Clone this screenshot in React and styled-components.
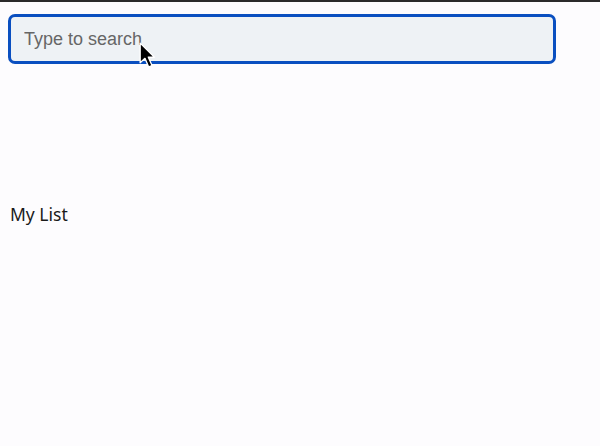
import React from "react";
import styled, { createGlobalStyle } from "styled-components";

const GlobalStyle = createGlobalStyle`
	html, body {
		margin: 0;
		padding: 0;
		background: #fdfcfe;
	}
	body {
		border-top: 2px solid #2a2a2a;
		min-height: 444px;
	}
`;

const Page = styled.div`
	position: relative;
	display: flex;
	flex-direction: column;
	padding: 12px 8px 0 8px;
`;

const SearchBox = styled.div`
	position: relative;
	width: 548px;
`;

const SearchInput = styled.input`
	box-sizing: border-box;
	width: 100%;
	height: 50px;
	padding: 0 13px;
	border: 3px solid #0a4fc0;
	border-radius: 7px;
	background: #eef2f5;
	font-family: "Liberation Sans", Arial, sans-serif;
	font-size: 18px;
	color: #222;
	outline: none;
	&::placeholder {
		color: #666;
	}
`;

const Pointer = styled.svg`
	position: absolute;
	left: 131px;
	top: 28px;
	pointer-events: none;
`;

const ListTitle = styled.h2`
	margin: 138px 0 0 2px;
	font-family: "Noto Sans", "Open Sans", sans-serif;
	font-size: 17.5px;
	font-weight: 400;
	color: #1a1a1a;
`;

const App = () => {
	return (
		<>
			<GlobalStyle />
			<Page>
				<SearchBox>
					<SearchInput placeholder='Type to search' />
					<Pointer width='18' height='28' viewBox='0 0 16 25'>
						<path
							d='M1 1 L1 18.5 L5.3 14.6 L8.6 22.3 L11.6 21 L8.3 13.6 L13.8 13.6 Z'
							fill='#000'
							stroke='#fff'
							strokeWidth='1.2'
							strokeLinejoin='round'
						/>
					</Pointer>
				</SearchBox>
				<ListTitle>My List</ListTitle>
			</Page>
		</>
	);
};

export default App;
